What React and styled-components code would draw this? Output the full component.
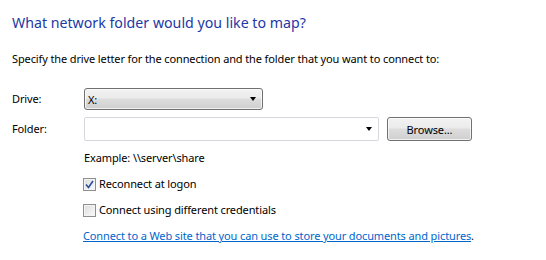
import React from "react";
import styled, { createGlobalStyle } from "styled-components";

const Global = createGlobalStyle`
  body {
    margin: 0;
    background: #ffffff;
    font-family: "Segoe UI", "Noto Sans", "Liberation Sans", sans-serif;
    font-size: 11px;
    letter-spacing: -0.12px;
    color: #000000;
  }
`;

const Page = styled.div`
  width: 546px;
  height: 260px;
  box-sizing: border-box;
  padding: 13px 0 0 12px;
  background: #ffffff;
`;

const Title = styled.h1`
  margin: 0;
  font-size: 14.2px;
  font-weight: normal;
  letter-spacing: 0;
  color: #2238a6;
  line-height: 20px;
`;

const Intro = styled.p`
  margin: 18px 0 0 0;
  line-height: 16px;
`;

const Form = styled.div`
  display: grid;
  grid-template-columns: 72px auto;
  row-gap: 7px;
  margin-top: 21px;
  align-items: center;
`;

const Label = styled.label`
  line-height: 16px;
`;

const Row = styled.div`
  display: flex;
  align-items: center;
  gap: 8px;
`;

const Combo = styled.div`
  box-sizing: border-box;
  width: ${(p) => p.$width}px;
  height: ${(p) => p.$height}px;
  display: flex;
  align-items: center;
  justify-content: space-between;
  padding: 0 6px 0 3px;
  border: 1px solid ${(p) => (p.$editable ? "#d5d9de" : "#707070")};
  border-radius: ${(p) => (p.$editable ? 2 : 3)}px;
  background: ${(p) =>
    p.$editable
      ? "#ffffff"
      : "linear-gradient(#f2f2f2 0%, #ebebeb 45%, #dddddd 50%, #cfcfcf 100%)"};
  box-shadow: ${(p) => (p.$editable ? "none" : "inset 0 0 0 1px rgba(255,255,255,0.7)")};
`;

const Arrow = styled.span`
  width: 0;
  height: 0;
  border-left: 3.5px solid transparent;
  border-right: 3.5px solid transparent;
  border-top: 4px solid #000000;
`;

const Button = styled.button`
  box-sizing: border-box;
  width: 85px;
  height: 24px;
  border: 1px solid #707070;
  border-radius: 3px;
  background: linear-gradient(#f2f2f2 0%, #ebebeb 45%, #dddddd 50%, #cfcfcf 100%);
  box-shadow: inset 0 0 0 1px rgba(255, 255, 255, 0.7);
  font-family: inherit;
  font-size: 11px;
  letter-spacing: inherit;
  color: #000000;
  padding: 0;
`;

const Options = styled.div`
  display: flex;
  flex-direction: column;
  padding-left: 72px;
  margin-top: 9px;
`;

const Hint = styled.div`
  line-height: 16px;
`;

const Check = styled.div`
  display: flex;
  align-items: center;
  gap: 3px;
  margin-top: ${(p) => p.$top}px;
  margin-left: -1px;
  line-height: 16px;
`;

const Box = styled.span`
  box-sizing: border-box;
  width: 13px;
  height: 13px;
  border: 1px solid #8f8f8f;
  background: linear-gradient(135deg, #dcdcdc, #fbfbfb);
  box-shadow: inset 0 0 0 1px #f4f4f4;
  display: flex;
  align-items: center;
  justify-content: center;
`;

const Link = styled.a`
  margin-top: 10px;
  margin-left: -1px;
  line-height: 16px;
  color: #000000;
  text-decoration: none;

  span {
    color: #0066cc;
    text-decoration: underline;
  }
`;

const Tick = () => (
  <svg width="9" height="9" viewBox="0 0 9 9">
    <path d="M1 4.5 L3.5 7.5 L8 1" fill="none" stroke="#2a4d9c" strokeWidth="1.6" />
  </svg>
);

export default function App() {
  return (
    <Page>
      <Global />
      <Title>What network folder would you like to map?</Title>
      <Intro>Specify the drive letter for the connection and the folder that you want to connect to:</Intro>
      <Form>
        <Label>Drive:</Label>
        <Row>
          <Combo $width={179} $height={22}>
            <span>X:</span>
            <Arrow />
          </Combo>
        </Row>
        <Label>Folder:</Label>
        <Row>
          <Combo $editable $width={295} $height={24}>
            <span />
            <Arrow />
          </Combo>
          <Button>Browse...</Button>
        </Row>
      </Form>
      <Options>
        <Hint>Example: \\server\share</Hint>
        <Check $top={10}>
          <Box>
            <Tick />
          </Box>
          Reconnect at logon
        </Check>
        <Check $top={10}>
          <Box />
          Connect using different credentials
        </Check>
        <Link href="#">
          <span>Connect to a Web site that you can use to store your documents and pictures</span>.
        </Link>
      </Options>
    </Page>
  );
}
